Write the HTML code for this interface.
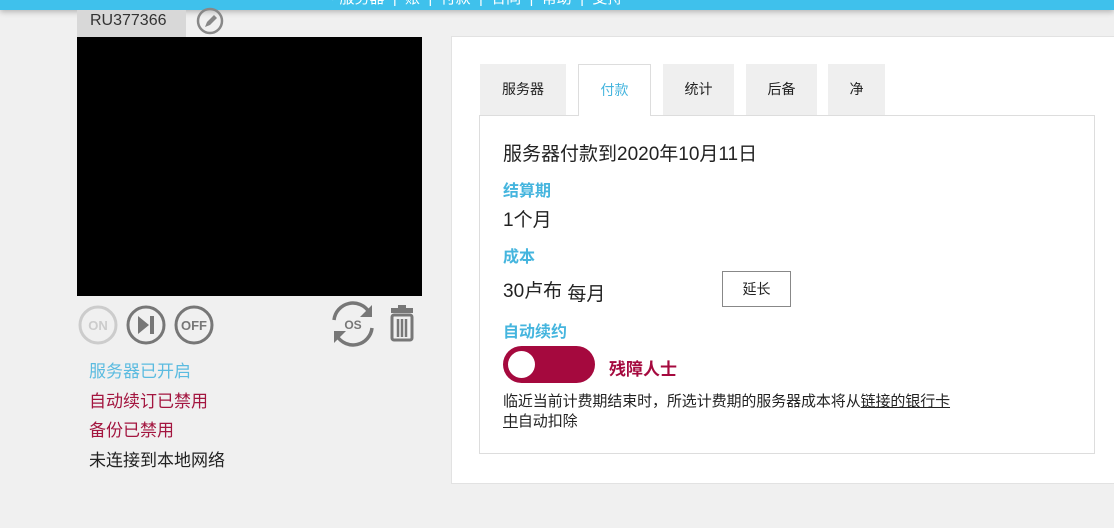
<!DOCTYPE html>
<html><head><meta charset="utf-8"><style>
*{margin:0;padding:0;box-sizing:border-box}
body{width:1114px;height:528px;background:#f0f0f0;position:relative;overflow:hidden;font-family:"Liberation Sans","Noto Sans CJK SC",sans-serif;color:#222}
.a{position:absolute}
.top{left:0;top:0;width:1114px;height:10px;background:#3fc1ec;box-shadow:0 2px 6px rgba(0,0,0,.25);overflow:hidden}
.top span{position:absolute;top:-13px;color:#fff;font-size:15px;white-space:nowrap}
.tab{position:absolute;top:64px;height:51px;background:#efefef;font-size:14px;text-align:center;line-height:51px;color:#222}
.lbl{font-size:16px;color:#45b5de;font-weight:bold}
</style></head><body>
<div class="a top"><span style="left:330px">◦ 服务器 &nbsp;| &nbsp;账 &nbsp;| &nbsp;付款 &nbsp;| &nbsp;合同 &nbsp;| &nbsp;帮助 &nbsp;| &nbsp;支持</span></div>
<div class="a" style="left:77px;top:10px;width:109px;height:27px;background:#d8d8d8;font-size:16px;line-height:22px;padding-left:13px;color:#333">RU377366</div>
<svg class="a" style="left:195px;top:7px" width="30" height="28" viewBox="0 0 30 28"><circle cx="15" cy="14" r="12" fill="none" stroke="#888" stroke-width="2.5"/><path d="M10 20l2-5 7-7 3 3-7 7z" fill="#888"/></svg>
<div class="a" style="left:77px;top:37px;width:345px;height:259px;background:#000"></div>
<svg class="a" style="left:76px;top:303px" width="145" height="44" viewBox="0 0 145 44">
<circle cx="22" cy="22" r="18" fill="none" stroke="#ccc" stroke-width="3"/><text x="22" y="27" font-size="13" font-weight="bold" fill="#ccc" text-anchor="middle" font-family="Liberation Sans">ON</text>
<circle cx="70" cy="22" r="18" fill="none" stroke="#777" stroke-width="3"/><path d="M62 13l11 9-11 9z M74 13h4v18h-4z" fill="#777"/>
<circle cx="118" cy="22" r="18" fill="none" stroke="#777" stroke-width="3"/><text x="118" y="27" font-size="13" font-weight="bold" fill="#777" text-anchor="middle" font-family="Liberation Sans">OFF</text>
</svg>
<svg class="a" style="left:328px;top:300px" width="100" height="48" viewBox="0 0 100 48">
<path d="M6 20a19 19 0 0 1 35-8" fill="none" stroke="#777" stroke-width="3.5"/><path d="M44 5v12h-12z" fill="#777"/>
<path d="M44 28a19 19 0 0 1-35 8" fill="none" stroke="#777" stroke-width="3.5"/><path d="M6 43v-12h12z" fill="#777"/>
<text x="25" y="29" font-size="12" font-weight="bold" fill="#777" text-anchor="middle" font-family="Liberation Sans">OS</text>
<rect x="63" y="8" width="22" height="5" fill="#777"/><rect x="70" y="5" width="8" height="4" fill="#777"/>
<rect x="64" y="15" width="20" height="25" rx="2" fill="none" stroke="#777" stroke-width="3"/><path d="M70 19v18M74 19v18M78 19v18" stroke="#777" stroke-width="2.5"/>
</svg>
<div class="a" style="left:89px;top:357px;font-size:17px;line-height:29.5px">
<div style="color:#5bbbe0">服务器已开启</div><div style="color:#a3153f">自动续订已禁用</div><div style="color:#a3153f">备份已禁用</div><div style="color:#222">未连接到本地网络</div></div>
<div class="a" style="left:451px;top:36px;width:670px;height:448px;background:#fff;border:1px solid #e2e2e2"></div>
<div class="tab" style="left:480px;width:86px">服务器</div>
<div class="tab" style="left:578px;width:73px;background:#fff;border:1px solid #ddd;border-bottom:none;height:52px;color:#45b5de;z-index:2">付款</div>
<div class="tab" style="left:663px;width:71px">统计</div>
<div class="tab" style="left:746px;width:71px">后备</div>
<div class="tab" style="left:828px;width:57px">净</div>
<div class="a" style="left:479px;top:115px;width:616px;height:339px;border:1px solid #ddd;background:#fff"></div>
<div class="a" style="left:503px;top:139px;font-size:19px">服务器付款到2020年10月11日</div>
<div class="a lbl" style="left:503px;top:177px">结算期</div>
<div class="a" style="left:503px;top:205px;font-size:19px">1个月</div>
<div class="a lbl" style="left:503px;top:243px">成本</div>
<div class="a" style="left:503px;top:276px;font-size:19px">30卢布 <span style="position:relative;top:3px">每月</span></div>
<div class="a" style="left:722px;top:271px;width:69px;height:36px;border:1px solid #888;font-size:14px;text-align:center;line-height:34px">延长</div>
<div class="a lbl" style="left:503px;top:318px">自动续约</div>
<div class="a" style="left:503px;top:346px;width:92px;height:37px;border-radius:19px;background:#a5093e"></div>
<div class="a" style="left:508px;top:351px;width:27px;height:27px;border-radius:50%;background:#fff"></div>
<div class="a" style="left:609px;top:355px;font-size:17px;font-weight:bold;color:#a5093e">残障人士</div>
<div class="a" style="left:503px;top:392px;width:480px;font-size:15px;line-height:20px;letter-spacing:-0.1px;white-space:nowrap">临近当前计费期结束时，所选计费期的服务器成本将从<u>链接的银行卡</u><br><u>中</u>自动扣除</div>
</body></html>
